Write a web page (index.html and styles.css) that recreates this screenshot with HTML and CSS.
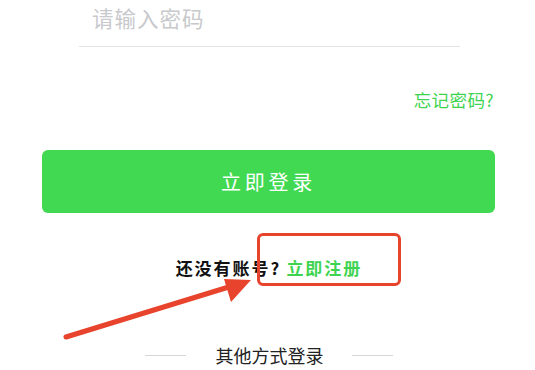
FILE: index.html
```html
<!DOCTYPE html>
<html lang="zh">
<head>
<meta charset="utf-8">
<link rel="stylesheet" href="styles.css">
</head>
<body>
<div class="page">
  <div class="field">
    <span class="placeholder">请输入密码</span>
  </div>
  <div class="forgot-row">
    <a class="forgot">忘记密码?</a>
  </div>
  <button class="login-btn">立即登录</button>
  <div class="register-row">
    <span class="ask">还没有账号?</span><a class="register">立即注册</a>
  </div>
  <div class="other">
    <span class="line"></span>
    <span class="other-text">其他方式登录</span>
    <span class="line"></span>
  </div>
  <div class="highlight"></div>
  <svg class="arrow" width="535" height="370" viewBox="0 0 535 370">
    <line x1="66" y1="337" x2="232" y2="286" stroke="#e8432c" stroke-width="5" stroke-linecap="round"/>
    <polygon points="251,280 224,279 231,302" fill="#e8432c"/>
  </svg>
</div>
</body>
</html>
```
FILE: styles.css
```css
* { box-sizing: border-box; }
html, body { margin: 0; padding: 0; background: #fff; }
body {
  font-family: "Noto Sans CJK SC", "Noto Sans", sans-serif;
  width: 535px;
  height: 370px;
  overflow: hidden;
}
.page {
  position: relative;
  padding: 0 40px 0 42px;
  display: flex;
  flex-direction: column;
}
.field {
  margin: 0 35px 0 37px;
  height: 47px;
  border-bottom: 1px solid #e2e2e2;
  padding-left: 13px;
}
.placeholder {
  display: block;
  font-size: 21.5px;
  line-height: 35px;
  letter-spacing: 1px;
  color: #c8c9cc;
}
.forgot-row {
  margin-top: 41px;
  height: 24px;
  display: flex;
  justify-content: flex-end;
  padding-right: 1px;
}
.forgot {
  font-size: 17.5px;
  line-height: 24px;
  letter-spacing: 0.4px;
  color: #3fd352;
}
.login-btn {
  margin-top: 38px;
  height: 63px;
  width: 453px;
  border: none;
  border-radius: 6px;
  background: #41d952;
  color: #fff;
  font-family: inherit;
  font-size: 20px;
  letter-spacing: 3.7px;
  padding: 0;
}
.register-row {
  margin-top: 43px;
  height: 24px;
  line-height: 24px;
  font-size: 17px;
  font-weight: 700;
  letter-spacing: 2px;
  display: flex;
  justify-content: center;
  padding-left: 1px;
}
.ask { color: #111; margin-right: 5px; }
.register { color: #3fd352; }
.other {
  margin-top: 63px;
  display: flex;
  align-items: center;
  justify-content: center;
  height: 24px;
  padding-left: 0;
}
.line {
  width: 41px;
  height: 1px;
  background: #d6d6d6;
}
.other-text {
  font-size: 18px;
  line-height: 24px;
  color: #222;
  margin: 0 28px 0 30px;
}
.highlight {
  position: absolute;
  left: 257px;
  top: 233px;
  width: 144px;
  height: 53px;
  border: 3.5px solid #e8432c;
  border-radius: 6px;
}
.arrow {
  position: absolute;
  left: 0;
  top: 0;
  pointer-events: none;
}
```
